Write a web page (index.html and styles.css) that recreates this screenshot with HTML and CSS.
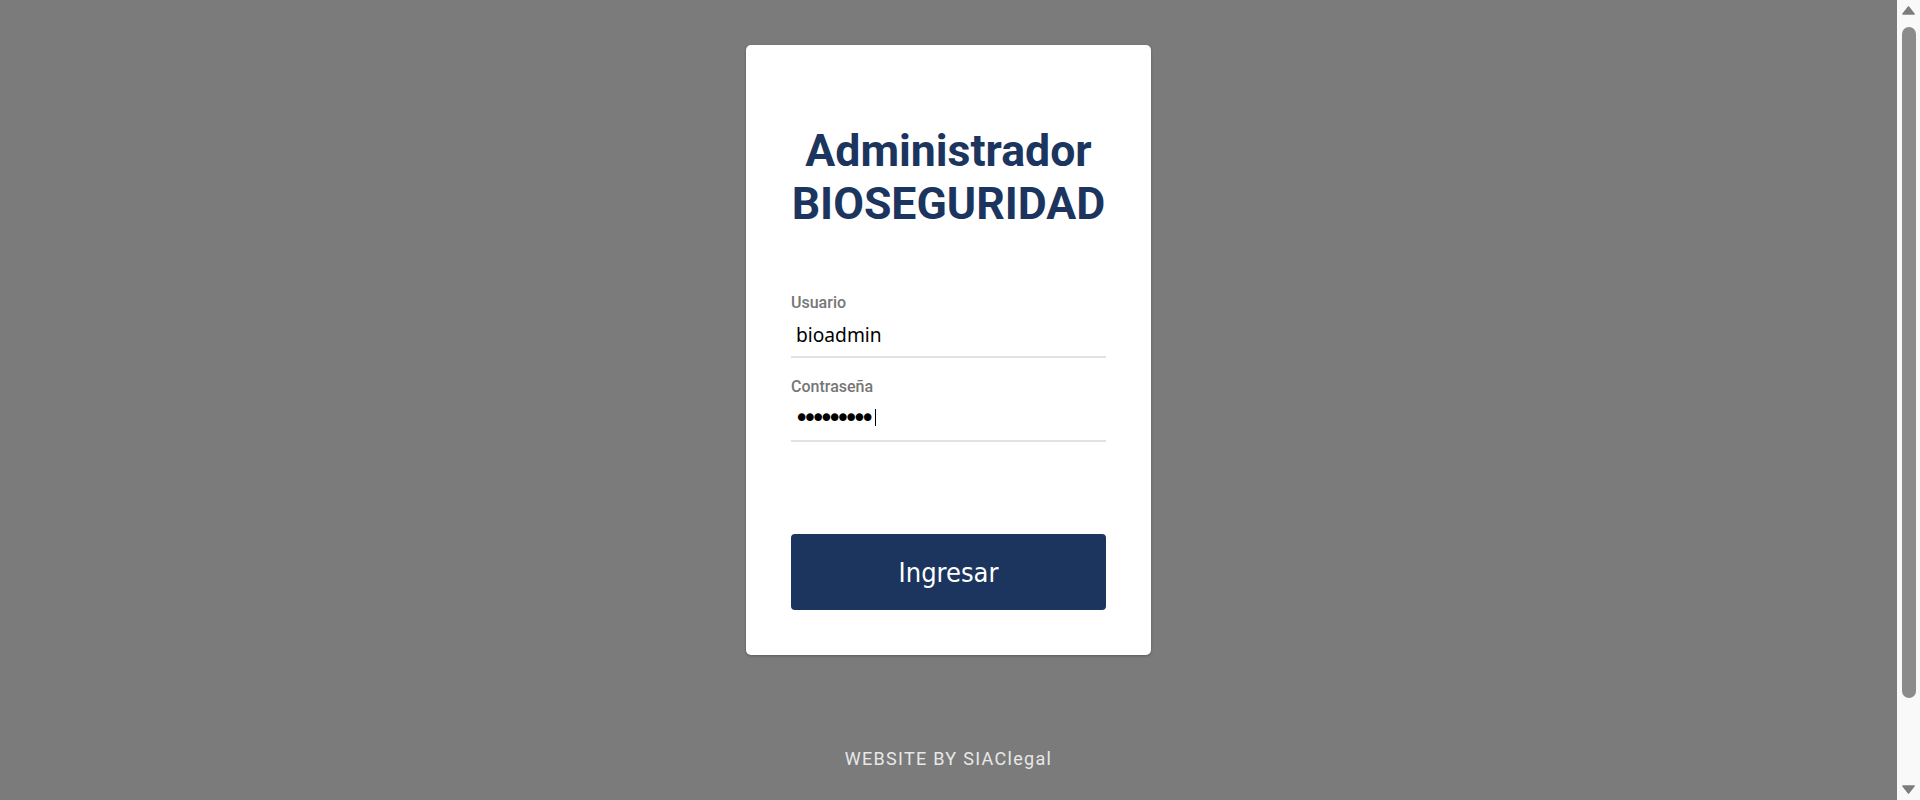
FILE: index.html
```html
<!DOCTYPE html>
<html lang="es">
<head>
<meta charset="utf-8">
<title>Administrador BIOSEGURIDAD</title>
<link rel="stylesheet" href="styles.css">
</head>
<body>
<div class="page">
  <main class="card">
    <h1 class="title">Administrador<br>BIOSEGURIDAD</h1>
    <form class="form">
      <div class="field">
        <label class="label" for="user">Usuario</label>
        <input class="input" id="user" type="text" value="bioadmin">
      </div>
      <div class="field">
        <label class="label" for="pass">Contraseña</label>
        <div class="pass-wrap">
          <input class="input input-pass" id="pass" type="password" value="bioadmin1">
          <span class="caret"></span>
        </div>
      </div>
      <button class="btn" type="button">Ingresar</button>
    </form>
  </main>
  <footer class="footer">WEBSITE BY SIAClegal</footer>
</div>
<div class="scrollbar" aria-hidden="true">
  <svg class="arrow" width="23" height="17" viewBox="0 0 23 17"><path d="M6 14 L11.5 7 L17 14 Z" fill="#7d7d7d" stroke="#7d7d7d" stroke-width="1.6" stroke-linejoin="round"/></svg>
  <div class="track"><div class="thumb"></div></div>
  <svg class="arrow" width="23" height="17" viewBox="0 0 23 17"><path d="M6 3 L11.5 10 L17 3 Z" fill="#7d7d7d" stroke="#7d7d7d" stroke-width="1.6" stroke-linejoin="round"/></svg>
</div>
</body>
</html>
```
FILE: styles.css
```css
html, body {
  margin: 0;
  padding: 0;
}
body {
  background: #7b7b7b;
  font-family: Roboto, "Liberation Sans", sans-serif;
  display: flex;
  height: 100vh;
  overflow: hidden;
}
.page {
  flex: 1;
  display: flex;
  flex-direction: column;
  align-items: center;
  padding-top: 45px;
}
.card {
  width: 405px;
  box-sizing: border-box;
  background: #fff;
  border-radius: 5px;
  padding: 0 45px 45px;
  box-shadow: 0 1px 3px rgba(0, 0, 0, 0.25);
}
.title {
  margin: 80px 0 62px;
  font-family: Roboto, sans-serif;
  font-weight: 700;
  font-size: 44.6px;
  line-height: 53px;
  text-align: center;
  color: #1c355e;
}
.form {
  display: flex;
  flex-direction: column;
}
.field {
  display: flex;
  flex-direction: column;
  margin-bottom: 19px;
}
.label {
  font-family: Roboto, sans-serif;
  font-weight: 500;
  font-size: 16px;
  line-height: 19px;
  color: #767676;
}
.input {
  width: 100%;
  height: 46px;
  box-sizing: border-box;
  border: none;
  border-bottom: 2px solid #e2e2e2;
  outline: none;
  padding: 0 5px;
  font-family: "Noto Sans", sans-serif;
  font-size: 19.2px;
  color: #000;
  background: transparent;
}
.pass-wrap {
  position: relative;
}
.input-pass {
  padding-left: 3px;
  font-family: "DejaVu Sans", sans-serif;
  font-size: 26px;
  letter-spacing: -7.1px;
}
.caret {
  position: absolute;
  left: 84px;
  top: 13px;
  width: 1px;
  height: 17px;
  background: #000;
}
.btn {
  margin-top: 73px;
  height: 76px;
  border: none;
  border-radius: 4px;
  background: #1c355e;
  color: #fff;
  font-family: "DejaVu Sans Condensed", "DejaVu Sans", sans-serif;
  font-stretch: condensed;
  font-size: 27px;
  cursor: pointer;
}
.footer {
  margin-top: 93px;
  font-family: Roboto, sans-serif;
  font-size: 18px;
  line-height: 21px;
  letter-spacing: 1.3px;
  color: #e8e8e8;
}
.scrollbar {
  width: 23px;
  height: 100vh;
  flex: none;
  background: #f9f9f9;
  display: flex;
  flex-direction: column;
}
.arrow {
  display: block;
  flex: none;
}
.track {
  flex: 1;
  padding: 10px 4px 85px 5px;
  display: flex;
}
.thumb {
  flex: 1;
  background: #8b8b8b;
  border-radius: 7px;
}
```
